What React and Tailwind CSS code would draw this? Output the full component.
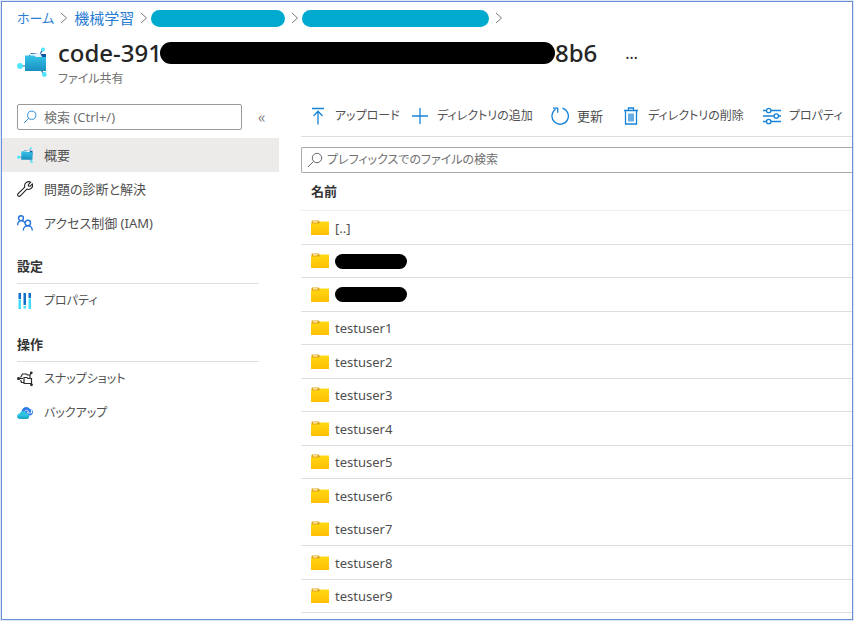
import React from "react";

function FileShareIcon({ className }) {
  return (
    <svg className={className} viewBox="0 0 30 30" fill="none" aria-hidden="true">
      <path d="M22 9 26 2M9 19H2M23 22l4 5" stroke="#2b5c9c" strokeWidth="1.200" />
      <path d="M12 8.500 14 6h5l1.500 1H29v9H12z" fill="#0b57a4" />
      <path d="m13 7 10-1 2 4-12 1z" fill="#e8f6fc" />
      <path d="M8 8.500h9l2 1.500h10v14H8z" fill="url(#share-face)" />
      <circle cx="26" cy="2.500" r="2" fill="#50e6ff" />
      <circle cx="3" cy="19" r="2.900" fill="#50e6ff" />
      <circle cx="27.300" cy="27.500" r="2.400" fill="#50e6ff" />
      <defs>
        <linearGradient id="share-face" x1="0" y1="8" x2="0" y2="24" gradientUnits="userSpaceOnUse">
          <stop stopColor="#35c5ea" />
          <stop offset="1" stopColor="#1a8fc0" />
        </linearGradient>
      </defs>
    </svg>
  );
}

function SearchIcon({ className }) {
  return (
    <svg className={className} viewBox="0 0 16 16" fill="none" stroke="currentColor" aria-hidden="true">
      <circle cx="10" cy="6" r="4.700" />
      <path d="m6.500 9.500-5.500 5.500" />
    </svg>
  );
}

function WrenchIcon() {
  return (
    <svg className="size-4" viewBox="0 0 16 16" fill="none" stroke="#222" strokeWidth="1.100" strokeLinejoin="round" aria-hidden="true">
      <path d="M13.800 1.200 11.300 3.700l.2 1.400 1.400.2 2.500-2.500a4.200 4.200 0 0 1-5.500 5.300l-6.600 6.700a1.500 1.500 0 0 1-2.200-2.200l6.700-6.500a4.200 4.200 0 0 1 6-4.900z" />
    </svg>
  );
}

function AccessIcon() {
  return (
    <svg className="size-4" viewBox="0 0 16 16" fill="none" stroke="#2672d9" strokeWidth="1.400" aria-hidden="true">
      <circle cx="4" cy="3.200" r="2.400" />
      <path d="M.7 10.200C.7 4.500 7.200 4.500 7.600 8" />
      <circle cx="10.800" cy="8" r="2.700" />
      <path d="M6.300 15.600c0-6.400 9-6.400 9 0" />
    </svg>
  );
}

function BarsIcon() {
  return (
    <svg className="size-4" viewBox="0 0 16 16" aria-hidden="true">
      <path d="M1.500 0H4v6H1.500zM6.500 0H9v12H6.500zM11.500 0H14v5h-2.500z" fill="#0f6fc9" />
      <path d="M1.500 6.500H4V16H1.500zM6.500 13H9v2.500H6.500zM11.500 5.500H14V16h-2.500z" fill="#43dcfb" />
    </svg>
  );
}

function SnapshotIcon() {
  return (
    <svg className="size-4" viewBox="0 0 16 16" fill="none" stroke="#2b2b2b" strokeWidth="1.200" aria-hidden="true">
      <path d="M3.500 6.500 5.500 3h4l1 1H13M3.500 9l1 2.500h2M7 12.500v-6h3l1 1h3.500v5zM13 4v3.500M2 7.500h4M13 4l1-2M13.500 12l1 1.500" />
      <circle cx="1.600" cy="7.500" r="1" fill="#2b2b2b" />
      <circle cx="14.300" cy="1.800" r=".8" fill="#2b2b2b" />
      <circle cx="14.500" cy="13.800" r=".8" fill="#2b2b2b" />
    </svg>
  );
}

function BackupIcon() {
  return (
    <svg className="size-4" viewBox="0 0 16 16" aria-hidden="true">
      <path d="M4.500 7C5 1.500 11 .5 12.800 4c3.800 0 4.400 5.800.4 6.500H9z" fill="#2f7be6" />
      <path d="M7 7.500C8 5 10 4.800 11.500 6.200L10 8h4.500V4" fill="none" stroke="#e9f3ff" strokeWidth=".9" />
      <path d="M3.200 14C-1 13.500-.7 8.700 2.800 8.400 3.500 5.200 8.500 5 9.500 8.500c3.300.2 3.600 5 .2 5.500z" fill="#2cc3e3" />
      <path d="M.2 11.500h12C12 13.200 11 14 9.700 14H3.200C1.500 13.900.3 13 .2 11.500z" fill="#1fa9cb" />
    </svg>
  );
}

function FolderIcon() {
  return (
    <svg className="h-4 w-[18px] shrink-0" viewBox="0 0 18 16" aria-hidden="true">
      <path d="M.5 3V1.500Q.5.500 1.500.500H7.500L9 2v2H.5z" fill="#dfa312" />
      <path d="M2 1.200h4.500v1.300H2z" fill="#fff0c0" />
      <path d="M0 3.500h8L9.500 1.500H18V15H0z" fill="url(#folder-face)" />
      <defs>
        <linearGradient id="folder-face" x1="0" y1="2" x2="0" y2="16" gradientUnits="userSpaceOnUse">
          <stop stopColor="#ffd712" />
          <stop offset="1" stopColor="#ffbd04" />
        </linearGradient>
      </defs>
    </svg>
  );
}

const toolPaths = {
  upload: <path d="M3 1.500h12M9 17.500V4M4.500 9 9 4.300 13.500 9" />,
  add: <path d="M9 1v16M1 9h16" />,
  refresh: <path d="M11.500 1.200A8.200 8.200 0 1 1 4.500 2.300M2 1.200h4.700v4.500" />,
  remove: <path d="M2 3.500h14M6.500 3V1h5v2M3.500 4v13h11V4M7 6.500v8M9 6.500v8M11 6.500v8" />,
  properties: (
    <>
      <path d="M0 3.500h3.500M8 3.500h10M0 9h11M15.500 9H18M0 14.500h3.500M8 14.500h10" />
      <circle cx="5.700" cy="3.500" r="2.200" />
      <circle cx="13.300" cy="9" r="2.200" />
      <circle cx="5.700" cy="14.500" r="2.200" />
    </>
  ),
};

function Tool({ icon, label, className }) {
  return (
    <button type="button" className={`flex shrink-0 items-center gap-2 whitespace-nowrap ${className}`}>
      <svg className="size-[18px] shrink-0" viewBox="0 0 18 18" fill="none" stroke="#1683d8" strokeWidth="1.300" aria-hidden="true">
        {toolPaths[icon]}
      </svg>
      {label}
    </button>
  );
}

function Crumb() {
  return (
    <svg className="h-3 w-2 shrink-0" viewBox="0 0 8 12" fill="none" stroke="#777" aria-hidden="true">
      <path d="m1 1 5.500 5L1 11" />
    </svg>
  );
}

function NavItem({ icon, label, active, className = "" }) {
  return (
    <li>
      <a
        href="#"
        aria-current={active ? "page" : undefined}
        className={`flex h-[34px] items-center gap-[11px] pl-[15px] ${active ? "bg-[#edebe9]" : ""} ${className}`}
      >
        {icon}
        {label}
      </a>
    </li>
  );
}

function NavGroup({ title, children }) {
  return (
    <section className="mt-3">
      <h2 className="mr-5 ml-[15px] flex h-8 items-center border-b border-[#dedede] pb-[3px] font-bold text-[#333]">{title}</h2>
      <ul>{children}</ul>
    </section>
  );
}

const rows = [
  { name: "[..]" },
  { masked: true },
  { masked: true },
  { name: "testuser1" },
  { name: "testuser2" },
  { name: "testuser3" },
  { name: "testuser4" },
  { name: "testuser5" },
  { name: "testuser6", open: true },
  { name: "testuser7" },
  { name: "testuser8" },
  { name: "testuser9" },
];

export default function App() {
  return (
    <div className="min-h-screen bg-[#dce6f7] p-px font-['Noto_Sans','Noto_Sans_CJK_JP',sans-serif] text-[13px] leading-5 text-[#505050] [font-feature-settings:'palt']">
      <div className="min-h-[619px] overflow-hidden border border-[#6b8fd6] bg-white pb-[6px]">
        <nav aria-label="パンくずリスト" className="flex h-8 items-center gap-[6px] pl-[15px] text-[#2b7cd3]">
          <a href="#">ホーム</a>
          <Crumb />
          <a href="#" className="text-[15px]">機械学習</a>
          <Crumb />
          <span className="-ml-[3px] h-[17px] w-[134px] rounded-full bg-[#00a9ce]" />
          <Crumb />
          <span className="-ml-[3px] h-[17px] w-[187px] rounded-full bg-[#00a9ce]" />
          <Crumb />
        </nav>

        <header className="mb-[6px] flex h-14 items-center gap-[11px] pl-[15px]">
          <FileShareIcon className="size-[30px] shrink-0" />
          <div>
            <h1 className="flex h-8 items-center text-2xl font-medium whitespace-nowrap text-[#252525]">
              code-391
              <span className="-ml-0.5 h-[22px] w-[395px] rounded-full bg-black" />
              8b6
              <button type="button" aria-label="その他" className="ml-7 text-base font-normal">
                …
              </button>
            </h1>
            <p className="mt-[2px] text-xs leading-4 text-[#707070]">ファイル共有</p>
          </div>
        </header>

        <div className="flex">
          <aside className="w-[277px] shrink-0">
            <div className="my-2 flex items-center pl-[15px]">
              <label className="flex h-[26px] w-[225px] items-center gap-[7px] rounded-xs border border-[#999] px-[5px] pb-px">
                <SearchIcon className="size-[14px] text-[#1683d8]" />
                <input
                  type="search"
                  aria-label="検索"
                  placeholder="検索 (Ctrl+/)"
                  className="min-w-0 flex-1 outline-none placeholder:text-[#707070]"
                />
              </label>
              <button type="button" aria-label="メニューを折りたたむ" className="ml-4 text-base font-light">
                «
              </button>
            </div>
            <ul>
              <NavItem active icon={<FileShareIcon className="size-4" />} label="概要" />
              <NavItem icon={<WrenchIcon />} label="問題の診断と解決" />
              <NavItem icon={<AccessIcon />} label="アクセス制御 (IAM)" />
            </ul>
            <NavGroup title="設定">
              <NavItem icon={<BarsIcon />} label="プロパティ" className="text-xs" />
            </NavGroup>
            <NavGroup title="操作">
              <NavItem icon={<SnapshotIcon />} label="スナップショット" className="text-xs" />
              <NavItem icon={<BackupIcon />} label="バックアップ" className="text-xs" />
            </NavGroup>
          </aside>

          <main className="ml-[22px] min-w-0 flex-1">
            <div className="flex h-[41px] items-center overflow-hidden border-b border-[#dedede] pl-2">
              <Tool icon="upload" label="アップロード" className="w-[102px] text-xs" />
              <Tool icon="add" label="ディレクトリの追加" className="w-[140px] text-xs" />
              <Tool icon="refresh" label="更新" className="w-[71px]" />
              <Tool icon="remove" label="ディレクトリの削除" className="w-[141px] text-xs" />
              <Tool icon="properties" label="プロパティ" className="text-xs" />
            </div>
            <label className="mt-[10px] flex h-[26px] items-center gap-1 rounded-l-xs border border-r-0 border-[#aaa] pb-px pl-[5px]">
              <SearchIcon className="size-4 text-[#666]" />
              <input
                type="search"
                aria-label="ファイルの検索"
                placeholder="プレフィックスでのファイルの検索"
                className="min-w-0 flex-1 text-xs outline-none placeholder:text-[#707070]"
              />
            </label>
            <table className="w-full border-separate border-spacing-0">
              <thead>
                <tr className="h-[38px]">
                  <th scope="col" className="border-b border-[#eeeeee] p-0 pb-px pl-[10px] text-left font-bold text-[#333]">
                    名前
                  </th>
                </tr>
              </thead>
              <tbody>
                {rows.map((row, i) => (
                  <tr key={i} className="h-[34px] even:h-[33px]">
                    <td className={`border-b p-0 pl-[10px] ${row.open ? "border-white" : "border-[#dedede]"}`}>
                      <div className="flex items-center gap-[6px]">
                        <FolderIcon />
                        {row.masked ? <span className="h-[15px] w-[72px] rounded-full bg-black" /> : row.name}
                      </div>
                    </td>
                  </tr>
                ))}
              </tbody>
            </table>
          </main>
        </div>
      </div>
    </div>
  );
}
